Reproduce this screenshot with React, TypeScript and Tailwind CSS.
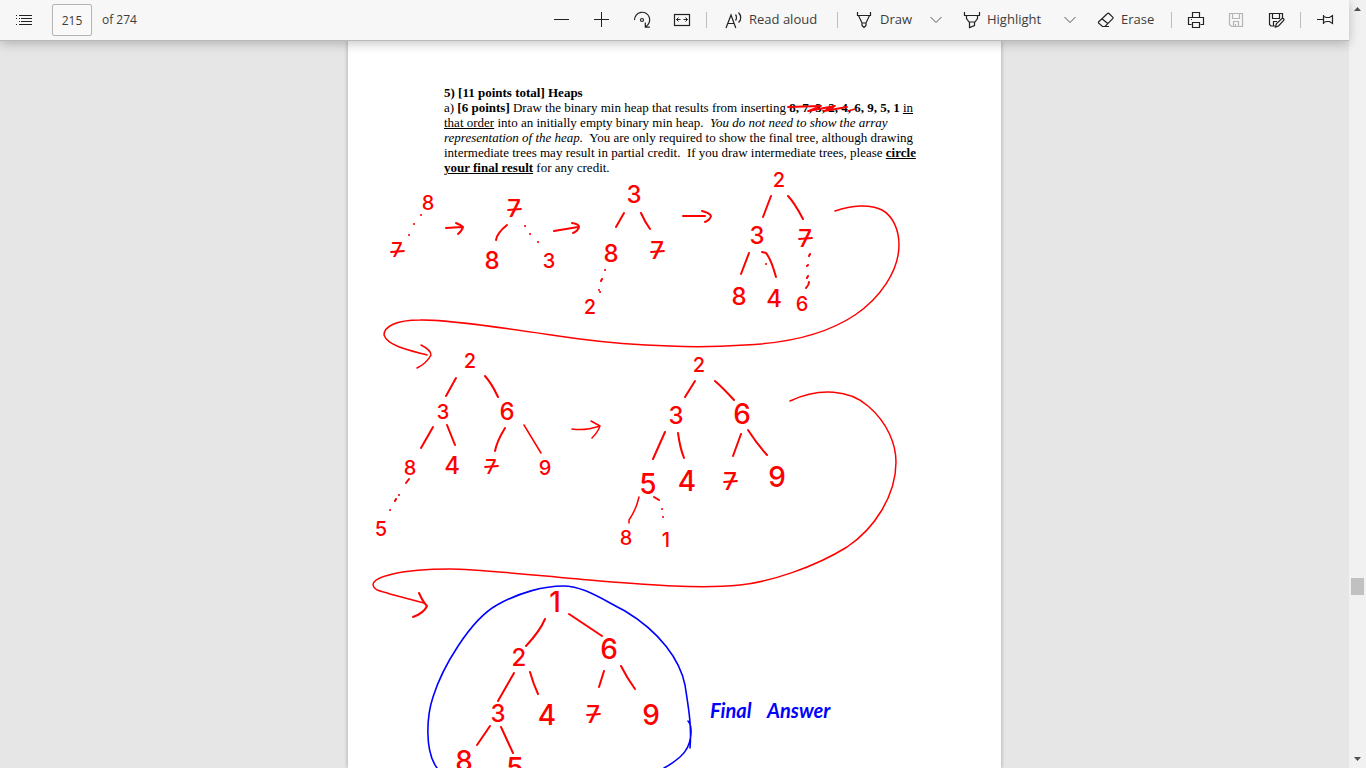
import React from "react";

type IconProps = { children: React.ReactNode; className?: string };

function Icon({ children, className = "" }: IconProps) {
  return (
    <svg
      width="18"
      height="18"
      viewBox="0 0 18 18"
      fill="none"
      stroke="currentColor"
      strokeWidth="1.2"
      aria-hidden="true"
      className={`shrink-0 ${className}`}
    >
      {children}
    </svg>
  );
}

function IconButton({ label, children, disabled }: { label: string; children: React.ReactNode; disabled?: boolean }) {
  return (
    <button
      type="button"
      aria-label={label}
      disabled={disabled}
      className="flex h-8 w-10 shrink-0 items-center justify-center text-[#222] disabled:text-[#b5b5b5]"
    >
      <Icon>{children}</Icon>
    </button>
  );
}

function Separator() {
  return <span className="mx-1 h-4 w-px shrink-0 bg-[#bdbdbd]" />;
}

function Chevron({ label }: { label: string }) {
  return (
    <button type="button" aria-label={label} className="flex h-8 w-[35px] shrink-0 items-center justify-center text-[#555]">
      <svg width="12" height="8" viewBox="0 0 12 8" fill="none" stroke="currentColor" aria-hidden="true">
        <path d="M.5 1 6 6.5 11.5 1" />
      </svg>
    </button>
  );
}

function Toolbar() {
  return (
    <header className="relative z-10 flex h-[41px] shrink-0 items-center border-b border-[#b9b9b9] bg-[#f7f7f7] pr-1 pl-1 text-[13px] text-[#3c3c3c] shadow-[0_3px_10px_rgba(0,0,0,0.22)]">
      <button type="button" aria-label="Table of contents" className="flex h-8 w-10 items-center justify-center text-[#222]">
        <svg width="16" height="12" viewBox="0 0 16 12" fill="currentColor" shapeRendering="crispEdges" aria-hidden="true">
          <path d="M0 1h1v1H0zM3 1h13v1H3zM0 4h1v1H0zM3 4h1v1H3zM5 4h11v1H5zM3 7h1v1H3zM5 7h11v1H5zM0 10h1v1H0zM3 10h13v1H3z" />
        </svg>
      </button>
      <label className="ml-2 flex items-center gap-[10px]">
        <input
          type="text"
          aria-label="Page number"
          defaultValue="215"
          className="h-8 w-10 rounded-xs border border-[#b4b4b4] bg-[#f9f9f9] text-center text-[12px] outline-none"
        />
        <span className="text-[12px]">of 274</span>
      </label>

      <div className="ml-auto flex items-center">
        <IconButton label="Zoom out">
          <path d="M.5 8.500h15" shapeRendering="crispEdges" />
        </IconButton>
        <IconButton label="Zoom in">
          <path d="M.5 8.500h15M8.500 1v15" shapeRendering="crispEdges" />
        </IconButton>
        <IconButton label="Rotate">
          <path d="M1.500 9A7.600 7.600 0 1 1 12.600 15.600M12.300 11.500v4.700h4.500" />
          <circle cx="9" cy="9" r="1.500" />
        </IconButton>
        <IconButton label="Fit to width">
          <rect x="1.500" y="3.500" width="15" height="11" />
          <path d="M3.500 8.500h4M10.500 8.500h4M5.500 6.500l-2 2 2 2M12.500 6.500l2 2-2 2" strokeWidth="1" />
        </IconButton>
        <Separator />
        <button type="button" className="flex h-8 w-[122px] items-center gap-[6px] pl-[14px] whitespace-nowrap">
          <Icon className="text-[#222]">
            <path d="M1 17 6 4l4.800 13M2.800 12.500h6.300M10.500 3.500c1.300 1.500 1.300 4.500 0 6M13.500 1.500c3 3 3 7.500 0 10" />
          </Icon>
          Read aloud
        </button>
        <Separator />
        <button type="button" className="flex h-8 w-[76px] items-center gap-[6px] pl-[14px] whitespace-nowrap">
          <Icon className="text-[#222]">
            <path d="M1.500 1v3.500h13V1M2.500 4.500 6 12h4l3.500-7.500M6 12v2.500l2 2 2-2V12" />
          </Icon>
          Draw
        </button>
        <Chevron label="Draw options" />
        <button type="button" className="flex h-8 w-[99px] items-center gap-[6px] pl-[10px] whitespace-nowrap">
          <Icon className="text-[#222]">
            <path d="M1.500 1v3.500h15V1M3.500 4.500v3l2.500 3.500h6l2.500-3.500v-3M6.500 11v5.500l5-2V11" />
          </Icon>
          Highlight
        </button>
        <Chevron label="Highlight options" />
        <button type="button" className="flex h-8 w-20 items-center gap-[6px] pl-[10px] whitespace-nowrap">
          <Icon className="text-[#222]">
            <path d="m1.500 11 9-8.500c.5-.5 1-.5 1.500 0l3.700 3.700c.5.5.5 1 0 1.500L8 15.500H5.500L1.500 12zM5 7.800l6 5M7 15.500h5" />
          </Icon>
          Erase
        </button>
        <Separator />
        <IconButton label="Print">
          <path d="M5.500 6.500v-5h7v5M4.500 13.500h-3v-7h15v7h-3M5.500 11.500h7v5h-7z" />
          <path d="M4 8.500h1" />
        </IconButton>
        <IconButton label="Save" disabled>
          <path d="M2.500 2.500h13v13h-11l-2-2zM5.500 2.500v5h7v-5M6.500 15v-4.500h5V15M8.500 13v2" />
        </IconButton>
        <IconButton label="Save as">
          <path d="M15.500 7V2.500h-13v11l1.500 1.500h4M5.500 2.500v5h7v-5M6.500 15v-4.500H10" />
          <path d="m8.500 16 1-3.500 5.500-5c1.500-.5 2.500.7 1.700 2L11.500 15z" />
        </IconButton>
        <Separator />
        <IconButton label="Unpin toolbar">
          <path d="M1 8.500h6M7.500 4v9M7.500 5.500l3 1h3l3-2v8l-3-2h-3l-3 1" />
        </IconButton>
      </div>
    </header>
  );
}

// Handwritten labels: [text, centre x, baseline y]
type Mark = [string, number, number];

const smallMarks: Mark[] = [
  ["8", 428, 210], ["7", 397, 257], ["3", 549, 268], ["2", 590, 314],
  ["2", 779, 187], ["6", 802, 311], ["2", 470, 368], ["3", 443, 419],
  ["8", 410, 475], ["7", 491, 474], ["9", 545, 475], ["5", 381, 536],
  ["2", 699, 372], ["8", 626, 545], ["1", 666, 547],
];

const mediumMarks: Mark[] = [
  ["7", 514, 217], ["8", 492, 269], ["3", 634, 203], ["8", 611, 262],
  ["7", 657, 259], ["3", 757, 244], ["7", 805, 247], ["8", 739, 305],
  ["4", 774, 307], ["6", 507, 420], ["4", 452, 474], ["3", 676, 424],
  ["7", 730, 490], ["2", 519, 666], ["3", 498, 722], ["7", 593, 723],
];

const largeMarks: Mark[] = [
  ["6", 742, 424], ["5", 648, 494], ["4", 687, 491], ["9", 777, 487],
  ["1", 555, 612], ["6", 609, 659], ["4", 547, 725], ["9", 651, 725],
  ["8", 464, 771], ["5", 515, 778],
];

function Marks({ items, className }: { items: Mark[]; className: string }) {
  return (
    <g className={className}>
      {items.map(([t, x, y]) => (
        <text key={`${x}-${y}`} x={x} y={y}>
          {t}
        </text>
      ))}
    </g>
  );
}

const edges = [
  "M507 225Q497 233 496 240", "M624 213 616 227", "M641 213Q645 222 650 229",
  "M771 196 763 217", "M788 196Q794 202 803 219", "M749 253 741 274",
  "M762 252l4 1Q771 259 776 277", "M456 378 446 396", "M485 376Q492 384 498 397",
  "M433 427 421 448", "M447 425 455 445", "M505 428Q497 441 495 451",
  "M695 381 685 397", "M715 381Q723 388 734 400", "M665 432 653 459",
  "M678 433Q680 448 684 458", "M741 434 733 456", "M748 430Q757 444 767 455",
  "M545 619Q540 631 526 646", "M569 614 602 636", "M514 673 498 701",
  "M530 672Q533 683 538 694", "M604 671 599 687", "M621 666Q627 678 635 689",
  "M490 726 477 745", "M501 727 513 753",
].join("");

const arrows = [
  "M446 228 462 227M456 223Q461 225 463 227Q462 231 458 234",
  "M554 231 578 227M572 223Q579 224 579 227Q578 231 573 233",
  "M683 216h22M702 211Q710 213 711 216Q710 220 705 222",
].join("");

const thinStrokes = [
  "M524 425Q533 440 541 453", "M639 497Q636 510 629 520v3",
  "M572 429Q585 431 600 426M591 421 600 426Q598 432 592 438",
  "M835 211C852 205 870 204 882 210C893 216 899 230 899 245C899 271 880 298 855 315C828 333 790 343 745 345C715 347 690 347 670 346C640 345 610 343 580 339C530 332 450 319 420 320C395 320 384 327 384 335C388 346 408 350 427 355",
  "M421 345Q431 350 431 355Q427 363 417 368",
  "M790 401C820 387 850 390 868 406C888 423 896 445 896 462C896 496 874 529 847 547C815 567 770 582 740 585C700 589 650 585 600 581C540 576 480 569 450 569C400 569 373 577 373 585C374 591 382 591 390 594L424 603",
].join("");

const dots = [
  "M421 215h.1M414 224h.1M409 235h.1M525 226h.1M530 234h.1M538 242h.1",
  "M605 270h.1M602 279l-1 2M599 290h.1M600 292h.1M766 264h.1",
  "M810 254l-1 2M808 265l-1 1M808 276l-1 2M809 282q0 3-3 6",
  "M409 479l-3 4M399 495h.1M396 499l-1 2M390 510h.1",
  "M654 497l5 3M662 509h.1M663 517h.1",
].join("");

// Short bars through the sevens
const bars = [
  "M391 252 404 251M508 210 521 209M651 252 664 251M799 239 812 238",
  "M485 467 498 466M724 482 737 481M587 715 600 714",
].join("");

function Ink() {
  return (
    <svg
      viewBox="348 41 653 727"
      className="pointer-events-none absolute top-0 left-0 w-full"
      fill="none"
      strokeLinecap="round"
      strokeLinejoin="round"
    >
      <g stroke="#f00">
        <path d={edges + arrows} strokeWidth="2" />
        <path d={thinStrokes} strokeWidth="1.500" />
        <path d={dots} strokeWidth="2" />
        <path d={bars} strokeWidth="1.800" />
        <path d="M419 593Q423 602 427 606Q424 613 413 617" strokeWidth="2" />
        <path d="M788 107 821 106 808 111 835 106 824 111 847 107M848 111 855 109" strokeWidth="1.800" />
      </g>
      <g fill="#f00" textAnchor="middle" fontFamily="Inter, sans-serif" className="font-medium">
        <Marks items={smallMarks} className="text-[20px]" />
        <Marks items={mediumMarks} className="text-[24px]" />
        <Marks items={largeMarks} className="text-[28px]" />
      </g>
      <path
        d="M437 768C424 750 427 715 433 697C442 668 470 620 497 605C520 592 545 586 563 586C583 586 600 598 625 611C660 632 680 660 685 685C688 705 692 725 690 748M688 721C692 725 694 745 680 757C674 762 670 765 664 768"
        stroke="#00f"
        strokeWidth="1.600"
      />
      <g fill="#00f" fontFamily="Lato, sans-serif" className="text-[20px] font-bold italic">
        <text x="710" y="718">Final</text>
        <text x="767" y="718">Answer</text>
      </g>
    </svg>
  );
}

function Scrollbar() {
  return (
    <div className="flex w-[17px] shrink-0 flex-col items-center bg-[#f1f1f1]" aria-hidden="true">
      <svg width="17" height="17" viewBox="0 0 17 17" fill="#505050">
        <path d="M5 11h7L8.500 7z" />
      </svg>
      <div className="grow-[561]" />
      <div className="h-[17px] w-[13px] bg-[#c1c1c1]" />
      <div className="grow-[156]" />
      <svg width="17" height="17" viewBox="0 0 17 17" fill="#505050">
        <path d="M5 6h7l-3.500 4z" />
      </svg>
    </div>
  );
}

export default function App() {
  return (
    <div className="flex h-screen overflow-hidden font-['Open_Sans',sans-serif]">
      <div className="flex min-w-0 flex-1 flex-col">
        <Toolbar />
        <main className="flex min-h-0 flex-1 justify-center overflow-hidden bg-[#e6e6e6]">
          <article className="relative w-[653px] shrink-0 bg-white px-24 pt-11 font-['Liberation_Serif',serif] text-[13px] leading-[15px] whitespace-nowrap text-black shadow-[0_0_4px_rgba(0,0,0,0.3)]">
            <h1 className="font-bold">5) [11 points total] Heaps</h1>
            <p>
              a) <b>[6 points]</b> Draw the binary min heap that results from inserting <b>8, 7, 3, 2, 4, 6, 9, 5, 1</b>{" "}
              <u>in</u>
              <br />
              <u>that order</u> into an initially empty binary min heap.&nbsp; <i>You do not need to show the array</i>
              <br />
              <i>representation of the heap.</i>&nbsp; You are only required to show the final tree, although drawing
              <br />
              intermediate trees may result in partial credit.&nbsp; If you draw intermediate trees, please{" "}
              <b className="underline">circle</b>
              <br />
              <b className="underline">your final result</b> for any credit.
            </p>
            <Ink />
          </article>
        </main>
      </div>
      <Scrollbar />
    </div>
  );
}
